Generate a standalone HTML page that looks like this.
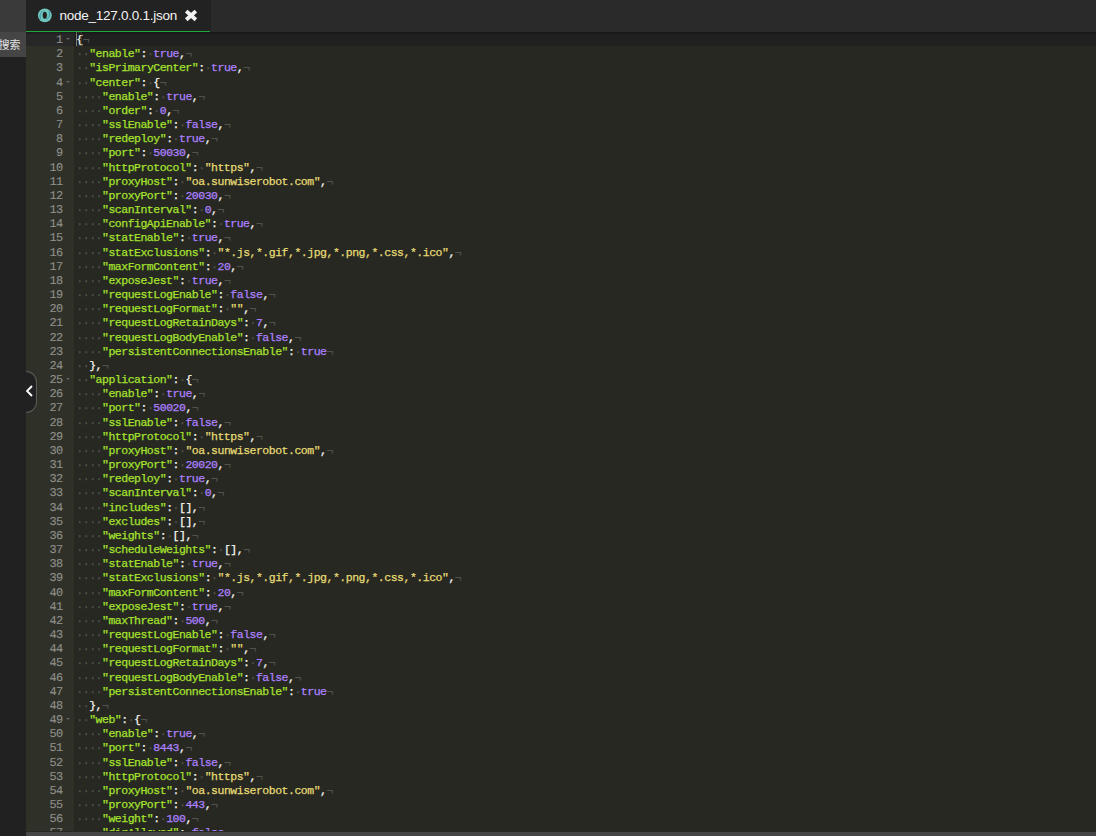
<!DOCTYPE html>
<html lang="zh-CN">
<head>
<meta charset="utf-8">
<title>node_127.0.0.1.json</title>
<style>
*{box-sizing:border-box;margin:0;padding:0}
html,body{width:1096px;height:836px;overflow:hidden;background:#272822}
body{position:relative;font-family:"Liberation Sans","Noto Sans CJK SC",sans-serif}
#topbar{position:absolute;left:0;top:0;width:1096px;height:32px;background:#2a2a2a;box-shadow:0 1px 2px rgba(0,0,0,.35);z-index:3}
#tab{position:absolute;left:26px;top:0;width:185px;height:32px;background:#222;color:#f4f4f4;font-size:13.5px;letter-spacing:-0.25px;line-height:32px;white-space:nowrap}
#tab:after{content:"";position:absolute;left:0;top:31px;width:184px;height:1px;background:#1fa93d}
#tab .name{position:absolute;left:33.5px;top:0}
#tab .ico{position:absolute;left:11px;top:8px;width:16px;height:16px}
#tab .x{position:absolute;left:158px;top:9px;width:14px;height:13px}
#side{position:absolute;left:0;top:0;width:26px;height:836px;background:#212121;z-index:5}
#search{position:absolute;left:0;top:32px;width:26px;height:25px;background:#454545;color:#e4e4e4;font-size:10.8px;line-height:24px;white-space:nowrap;overflow:hidden}
#search span{position:absolute;left:-1.3px;top:0.8px}
#corner{position:absolute;left:0;top:0;width:26px;height:32px;background:#3a3a3a}
#handle{position:absolute;left:26px;top:371px;width:11px;height:42px;background:#212121;border:1px solid #5a5a5a;border-left:none;border-radius:0 11px 11px 0;z-index:4}
#handle svg{position:absolute;left:-0.3px;top:13px;width:8px;height:12px}
#editor{position:absolute;left:26px;top:32px;width:1070px;height:799px;background:#272822;overflow:hidden;font-family:"Liberation Mono",monospace;font-size:11.5px;line-height:14.16px;color:#f8f8f2;letter-spacing:-0.486px;-webkit-text-stroke:0.25px}
#gutter{position:absolute;left:0;top:0;width:48px;height:100%;background:#2f3129;color:#8f908a;text-align:right;-webkit-text-stroke:0.1px;text-rendering:geometricPrecision;font-size:11.9px;letter-spacing:-0.72px}
.g{height:14.16px;padding-right:11.6px;position:absolute;left:0;width:48px;white-space:pre}
.g .fold{position:absolute;right:4.2px;top:5.8px;width:0;height:0;border-left:2.6px solid transparent;border-right:2.6px solid transparent;border-top:2.6px solid #62635d}
#code{position:absolute;left:50.3px;top:0;right:0}
.l{position:absolute;left:0;height:14.16px;white-space:pre}
#active{position:absolute;left:48px;right:0;top:0;height:14px;background:#202020}
#gactive{position:absolute;left:0;width:48px;top:0;height:14px;background:#272727}
#cursor{position:absolute;left:50px;top:0;width:1px;height:14px;background:rgba(248,248,240,.38)}
#bracket{position:absolute;left:50px;top:0;width:6px;height:14px;border:1px solid rgba(73,72,62,.5)}
.l .inv{color:#52524d}
.l .var{color:#a6e22e}
.l .str{color:#e6db74}
.l .num{color:#ae81ff}
#hscroll{position:absolute;left:26px;top:832px;width:1070px;height:4px;background:#454545;border-top:0 solid #222}
</style>
</head>
<body>
<div id="topbar">
  <div id="tab">
    <svg class="ico" viewBox="0 0 16 16"><g transform="translate(0.5,0.45)"><ellipse cx="7.35" cy="6.9" rx="6.9" ry="6.9" fill="#6fc6ba"/><ellipse cx="7.3" cy="6.8" rx="2.1" ry="3.6" fill="#222"/><path d="M3.1 10.6C2.2 8.2 2.4 5.6 3.6 4.1C4.4 3.2 5.5 3 6.2 3.4M11.5 2.6C12.3 5 12.2 7.8 11 9.4C10.2 10.3 9.2 10.5 8.5 10.2" fill="none" stroke="#3f8cb0" stroke-width=".9"/></g></svg>
    <span class="name">node_127.0.0.1.json</span>
    <svg class="x" viewBox="0 0 14 13"><path d="M2.25 2.04L11.85 10.76M11.85 2.04L2.25 10.76" fill="none" stroke="#f2f2f2" stroke-width="3.8"/></svg>
  </div>
</div>
<div id="side"><div id="corner"></div><div id="search"><span>搜索</span></div></div>
<div id="handle"><svg viewBox="0 0 8 12"><path d="M6 1L1 6L6 11" fill="none" stroke="#fff" stroke-width="1.9"/></svg></div>
<div id="editor">
  <div id="active"></div>
  <div id="gutter"><div id="gactive"></div>
<div class="g" style="top:0.5px">1<span class="fold"></span></div>
<div class="g" style="top:14.5px">2</div>
<div class="g" style="top:28.5px">3</div>
<div class="g" style="top:43.5px">4<span class="fold"></span></div>
<div class="g" style="top:57.5px">5</div>
<div class="g" style="top:71.5px">6</div>
<div class="g" style="top:85.5px">7</div>
<div class="g" style="top:99.5px">8</div>
<div class="g" style="top:113.5px">9</div>
<div class="g" style="top:128.5px">10</div>
<div class="g" style="top:142.5px">11</div>
<div class="g" style="top:156.5px">12</div>
<div class="g" style="top:170.5px">13</div>
<div class="g" style="top:184.5px">14</div>
<div class="g" style="top:198.5px">15</div>
<div class="g" style="top:213.5px">16</div>
<div class="g" style="top:227.5px">17</div>
<div class="g" style="top:241.5px">18</div>
<div class="g" style="top:255.5px">19</div>
<div class="g" style="top:269.5px">20</div>
<div class="g" style="top:283.5px">21</div>
<div class="g" style="top:298.5px">22</div>
<div class="g" style="top:312.5px">23</div>
<div class="g" style="top:326.5px">24</div>
<div class="g" style="top:340.5px">25<span class="fold"></span></div>
<div class="g" style="top:354.5px">26</div>
<div class="g" style="top:368.5px">27</div>
<div class="g" style="top:383.5px">28</div>
<div class="g" style="top:397.5px">29</div>
<div class="g" style="top:411.5px">30</div>
<div class="g" style="top:425.5px">31</div>
<div class="g" style="top:439.5px">32</div>
<div class="g" style="top:453.5px">33</div>
<div class="g" style="top:468.5px">34</div>
<div class="g" style="top:482.5px">35</div>
<div class="g" style="top:496.5px">36</div>
<div class="g" style="top:510.5px">37</div>
<div class="g" style="top:524.5px">38</div>
<div class="g" style="top:538.5px">39</div>
<div class="g" style="top:553.5px">40</div>
<div class="g" style="top:567.5px">41</div>
<div class="g" style="top:581.5px">42</div>
<div class="g" style="top:595.5px">43</div>
<div class="g" style="top:609.5px">44</div>
<div class="g" style="top:623.5px">45</div>
<div class="g" style="top:638.5px">46</div>
<div class="g" style="top:652.5px">47</div>
<div class="g" style="top:666.5px">48</div>
<div class="g" style="top:680.5px">49<span class="fold"></span></div>
<div class="g" style="top:694.5px">50</div>
<div class="g" style="top:708.5px">51</div>
<div class="g" style="top:723.5px">52</div>
<div class="g" style="top:737.5px">53</div>
<div class="g" style="top:751.5px">54</div>
<div class="g" style="top:765.5px">55</div>
<div class="g" style="top:779.5px">56</div>
<div class="g" style="top:793.5px">57</div>
  </div>
  <div id="code">
<div class="l" style="top:1px">{<span class="inv">¬</span></div>
<div class="l" style="top:15px"><span class="inv">··</span><span class="var">"enable"</span>:<span class="inv">·</span><span class="num">true</span>,<span class="inv">¬</span></div>
<div class="l" style="top:29px"><span class="inv">··</span><span class="var">"isPrimaryCenter"</span>:<span class="inv">·</span><span class="num">true</span>,<span class="inv">¬</span></div>
<div class="l" style="top:44px"><span class="inv">··</span><span class="var">"center"</span>:<span class="inv">·</span>{<span class="inv">¬</span></div>
<div class="l" style="top:58px"><span class="inv">····</span><span class="var">"enable"</span>:<span class="inv">·</span><span class="num">true</span>,<span class="inv">¬</span></div>
<div class="l" style="top:72px"><span class="inv">····</span><span class="var">"order"</span>:<span class="inv">·</span><span class="num">0</span>,<span class="inv">¬</span></div>
<div class="l" style="top:86px"><span class="inv">····</span><span class="var">"sslEnable"</span>:<span class="inv">·</span><span class="num">false</span>,<span class="inv">¬</span></div>
<div class="l" style="top:100px"><span class="inv">····</span><span class="var">"redeploy"</span>:<span class="inv">·</span><span class="num">true</span>,<span class="inv">¬</span></div>
<div class="l" style="top:114px"><span class="inv">····</span><span class="var">"port"</span>:<span class="inv">·</span><span class="num">50030</span>,<span class="inv">¬</span></div>
<div class="l" style="top:129px"><span class="inv">····</span><span class="var">"httpProtocol"</span>:<span class="inv">·</span><span class="str">"https"</span>,<span class="inv">¬</span></div>
<div class="l" style="top:143px"><span class="inv">····</span><span class="var">"proxyHost"</span>:<span class="inv">·</span><span class="str">"oa.sunwiserobot.com"</span>,<span class="inv">¬</span></div>
<div class="l" style="top:157px"><span class="inv">····</span><span class="var">"proxyPort"</span>:<span class="inv">·</span><span class="num">20030</span>,<span class="inv">¬</span></div>
<div class="l" style="top:171px"><span class="inv">····</span><span class="var">"scanInterval"</span>:<span class="inv">·</span><span class="num">0</span>,<span class="inv">¬</span></div>
<div class="l" style="top:185px"><span class="inv">····</span><span class="var">"configApiEnable"</span>:<span class="inv">·</span><span class="num">true</span>,<span class="inv">¬</span></div>
<div class="l" style="top:199px"><span class="inv">····</span><span class="var">"statEnable"</span>:<span class="inv">·</span><span class="num">true</span>,<span class="inv">¬</span></div>
<div class="l" style="top:214px"><span class="inv">····</span><span class="var">"statExclusions"</span>:<span class="inv">·</span><span class="str">"*.js,*.gif,*.jpg,*.png,*.css,*.ico"</span>,<span class="inv">¬</span></div>
<div class="l" style="top:228px"><span class="inv">····</span><span class="var">"maxFormContent"</span>:<span class="inv">·</span><span class="num">20</span>,<span class="inv">¬</span></div>
<div class="l" style="top:242px"><span class="inv">····</span><span class="var">"exposeJest"</span>:<span class="inv">·</span><span class="num">true</span>,<span class="inv">¬</span></div>
<div class="l" style="top:256px"><span class="inv">····</span><span class="var">"requestLogEnable"</span>:<span class="inv">·</span><span class="num">false</span>,<span class="inv">¬</span></div>
<div class="l" style="top:270px"><span class="inv">····</span><span class="var">"requestLogFormat"</span>:<span class="inv">·</span><span class="str">""</span>,<span class="inv">¬</span></div>
<div class="l" style="top:284px"><span class="inv">····</span><span class="var">"requestLogRetainDays"</span>:<span class="inv">·</span><span class="num">7</span>,<span class="inv">¬</span></div>
<div class="l" style="top:299px"><span class="inv">····</span><span class="var">"requestLogBodyEnable"</span>:<span class="inv">·</span><span class="num">false</span>,<span class="inv">¬</span></div>
<div class="l" style="top:313px"><span class="inv">····</span><span class="var">"persistentConnectionsEnable"</span>:<span class="inv">·</span><span class="num">true</span><span class="inv">¬</span></div>
<div class="l" style="top:327px"><span class="inv">··</span>},<span class="inv">¬</span></div>
<div class="l" style="top:341px"><span class="inv">··</span><span class="var">"application"</span>:<span class="inv">·</span>{<span class="inv">¬</span></div>
<div class="l" style="top:355px"><span class="inv">····</span><span class="var">"enable"</span>:<span class="inv">·</span><span class="num">true</span>,<span class="inv">¬</span></div>
<div class="l" style="top:369px"><span class="inv">····</span><span class="var">"port"</span>:<span class="inv">·</span><span class="num">50020</span>,<span class="inv">¬</span></div>
<div class="l" style="top:384px"><span class="inv">····</span><span class="var">"sslEnable"</span>:<span class="inv">·</span><span class="num">false</span>,<span class="inv">¬</span></div>
<div class="l" style="top:398px"><span class="inv">····</span><span class="var">"httpProtocol"</span>:<span class="inv">·</span><span class="str">"https"</span>,<span class="inv">¬</span></div>
<div class="l" style="top:412px"><span class="inv">····</span><span class="var">"proxyHost"</span>:<span class="inv">·</span><span class="str">"oa.sunwiserobot.com"</span>,<span class="inv">¬</span></div>
<div class="l" style="top:426px"><span class="inv">····</span><span class="var">"proxyPort"</span>:<span class="inv">·</span><span class="num">20020</span>,<span class="inv">¬</span></div>
<div class="l" style="top:440px"><span class="inv">····</span><span class="var">"redeploy"</span>:<span class="inv">·</span><span class="num">true</span>,<span class="inv">¬</span></div>
<div class="l" style="top:454px"><span class="inv">····</span><span class="var">"scanInterval"</span>:<span class="inv">·</span><span class="num">0</span>,<span class="inv">¬</span></div>
<div class="l" style="top:469px"><span class="inv">····</span><span class="var">"includes"</span>:<span class="inv">·</span>[],<span class="inv">¬</span></div>
<div class="l" style="top:483px"><span class="inv">····</span><span class="var">"excludes"</span>:<span class="inv">·</span>[],<span class="inv">¬</span></div>
<div class="l" style="top:497px"><span class="inv">····</span><span class="var">"weights"</span>:<span class="inv">·</span>[],<span class="inv">¬</span></div>
<div class="l" style="top:511px"><span class="inv">····</span><span class="var">"scheduleWeights"</span>:<span class="inv">·</span>[],<span class="inv">¬</span></div>
<div class="l" style="top:525px"><span class="inv">····</span><span class="var">"statEnable"</span>:<span class="inv">·</span><span class="num">true</span>,<span class="inv">¬</span></div>
<div class="l" style="top:539px"><span class="inv">····</span><span class="var">"statExclusions"</span>:<span class="inv">·</span><span class="str">"*.js,*.gif,*.jpg,*.png,*.css,*.ico"</span>,<span class="inv">¬</span></div>
<div class="l" style="top:554px"><span class="inv">····</span><span class="var">"maxFormContent"</span>:<span class="inv">·</span><span class="num">20</span>,<span class="inv">¬</span></div>
<div class="l" style="top:568px"><span class="inv">····</span><span class="var">"exposeJest"</span>:<span class="inv">·</span><span class="num">true</span>,<span class="inv">¬</span></div>
<div class="l" style="top:582px"><span class="inv">····</span><span class="var">"maxThread"</span>:<span class="inv">·</span><span class="num">500</span>,<span class="inv">¬</span></div>
<div class="l" style="top:596px"><span class="inv">····</span><span class="var">"requestLogEnable"</span>:<span class="inv">·</span><span class="num">false</span>,<span class="inv">¬</span></div>
<div class="l" style="top:610px"><span class="inv">····</span><span class="var">"requestLogFormat"</span>:<span class="inv">·</span><span class="str">""</span>,<span class="inv">¬</span></div>
<div class="l" style="top:624px"><span class="inv">····</span><span class="var">"requestLogRetainDays"</span>:<span class="inv">·</span><span class="num">7</span>,<span class="inv">¬</span></div>
<div class="l" style="top:639px"><span class="inv">····</span><span class="var">"requestLogBodyEnable"</span>:<span class="inv">·</span><span class="num">false</span>,<span class="inv">¬</span></div>
<div class="l" style="top:653px"><span class="inv">····</span><span class="var">"persistentConnectionsEnable"</span>:<span class="inv">·</span><span class="num">true</span><span class="inv">¬</span></div>
<div class="l" style="top:667px"><span class="inv">··</span>},<span class="inv">¬</span></div>
<div class="l" style="top:681px"><span class="inv">··</span><span class="var">"web"</span>:<span class="inv">·</span>{<span class="inv">¬</span></div>
<div class="l" style="top:695px"><span class="inv">····</span><span class="var">"enable"</span>:<span class="inv">·</span><span class="num">true</span>,<span class="inv">¬</span></div>
<div class="l" style="top:709px"><span class="inv">····</span><span class="var">"port"</span>:<span class="inv">·</span><span class="num">8443</span>,<span class="inv">¬</span></div>
<div class="l" style="top:724px"><span class="inv">····</span><span class="var">"sslEnable"</span>:<span class="inv">·</span><span class="num">false</span>,<span class="inv">¬</span></div>
<div class="l" style="top:738px"><span class="inv">····</span><span class="var">"httpProtocol"</span>:<span class="inv">·</span><span class="str">"https"</span>,<span class="inv">¬</span></div>
<div class="l" style="top:752px"><span class="inv">····</span><span class="var">"proxyHost"</span>:<span class="inv">·</span><span class="str">"oa.sunwiserobot.com"</span>,<span class="inv">¬</span></div>
<div class="l" style="top:766px"><span class="inv">····</span><span class="var">"proxyPort"</span>:<span class="inv">·</span><span class="num">443</span>,<span class="inv">¬</span></div>
<div class="l" style="top:780px"><span class="inv">····</span><span class="var">"weight"</span>:<span class="inv">·</span><span class="num">100</span>,<span class="inv">¬</span></div>
<div class="l" style="top:794px"><span class="inv">····</span><span class="var">"dirAllowed"</span>:<span class="inv">·</span><span class="num">false</span>,<span class="inv">¬</span></div>
  </div>
  <div id="bracket"></div>
  <div id="cursor"></div>
</div>
<div id="hscroll"></div>
</body>
</html>
